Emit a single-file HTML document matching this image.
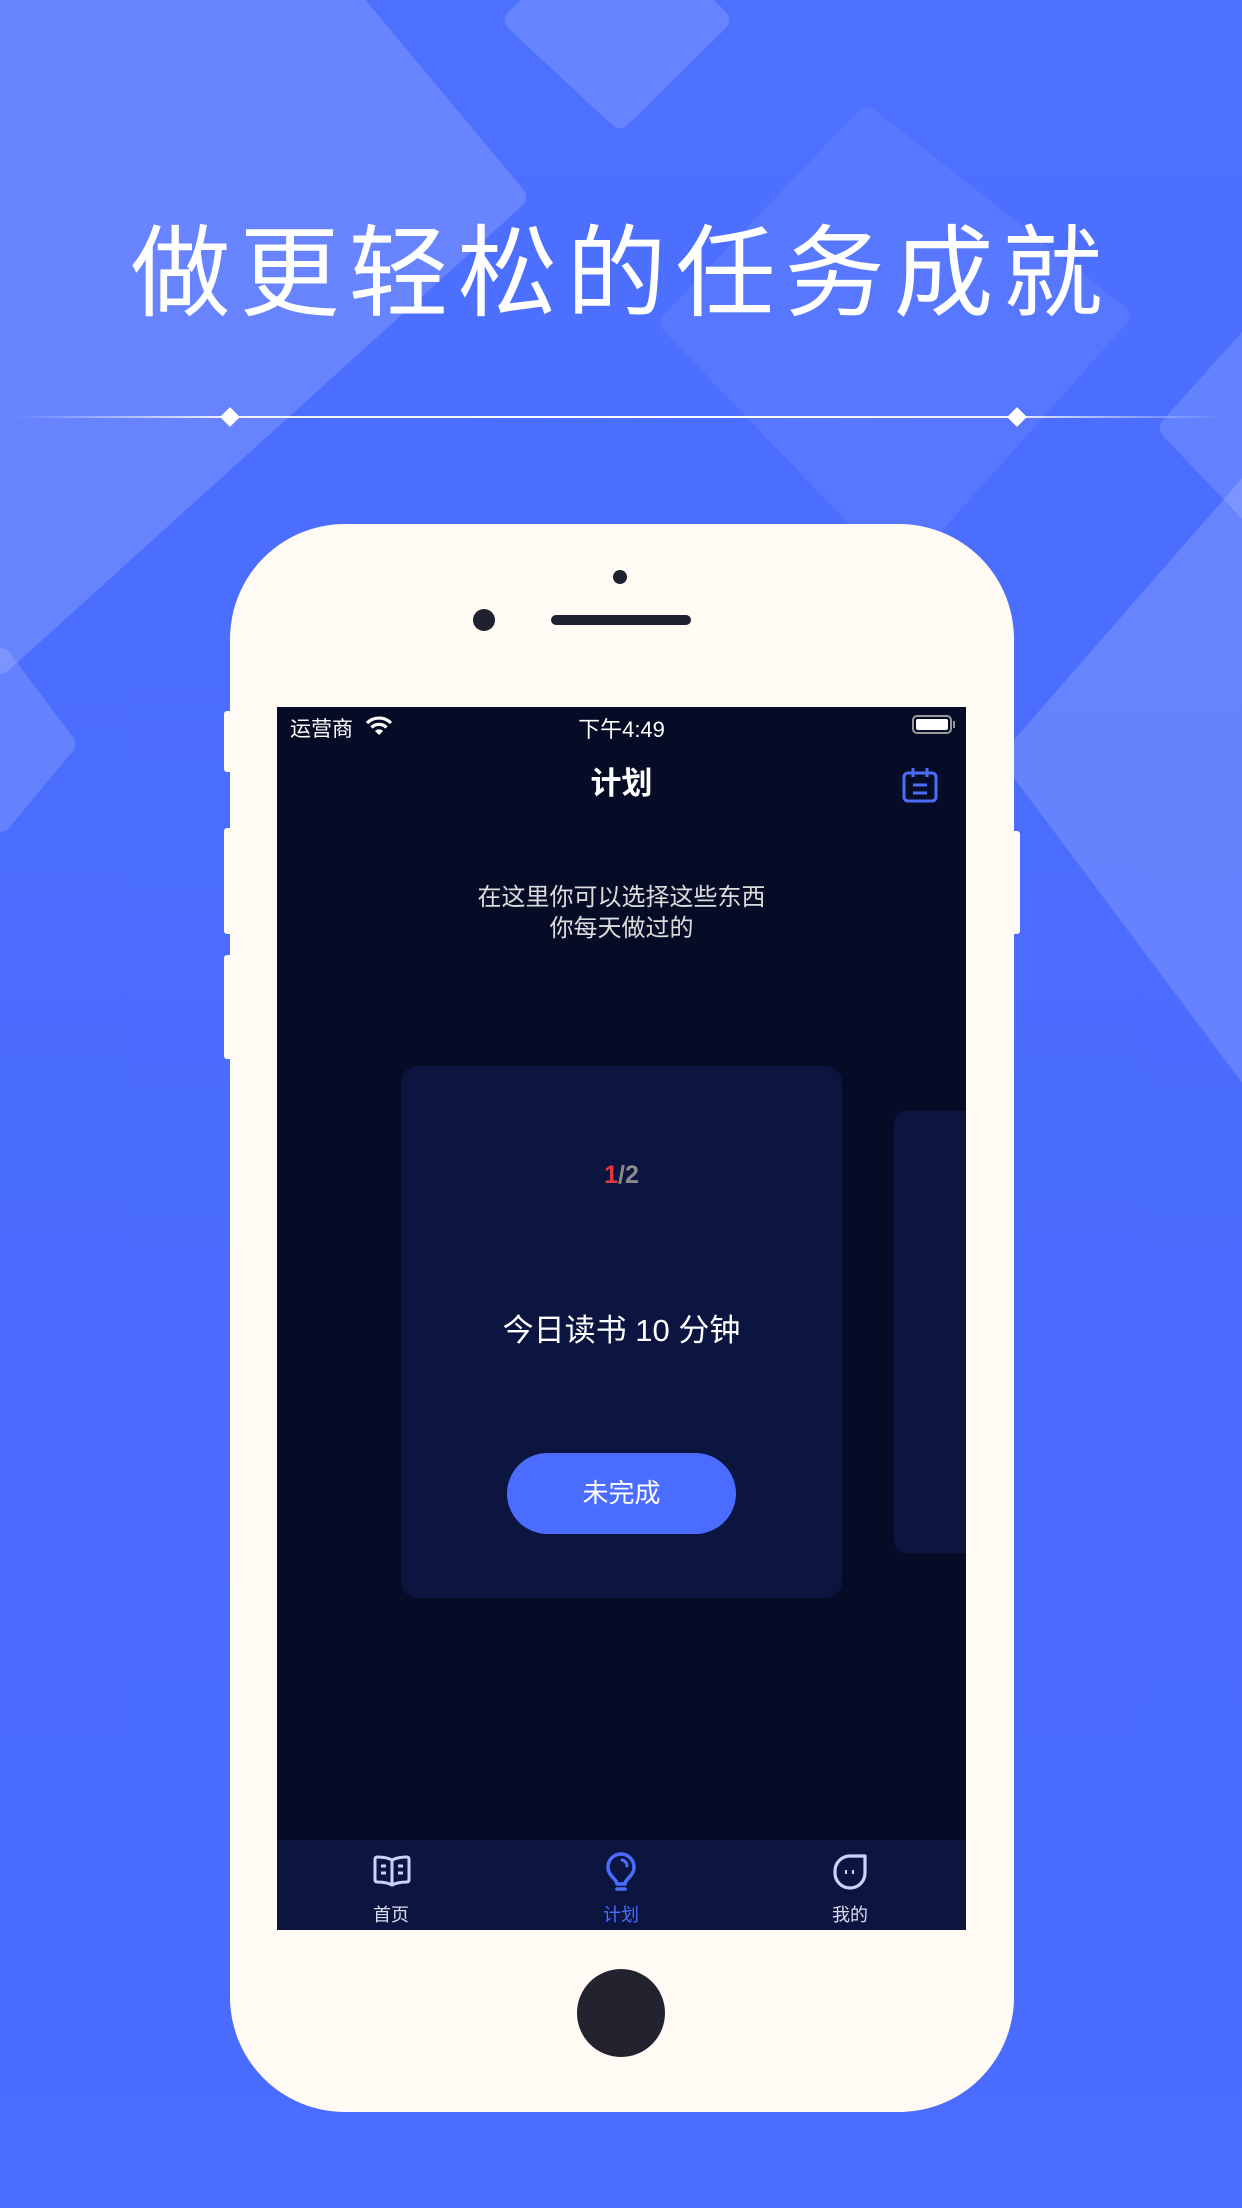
<!DOCTYPE html>
<html><head><meta charset="utf-8"><style>
*{margin:0;padding:0;box-sizing:border-box}
body{width:1242px;height:2208px;overflow:hidden;position:relative;background:linear-gradient(180deg,#4d70ff 0%,#4a6bfd 60%,#4a6cff 100%);font-family:"Liberation Sans","Noto Sans CJK SC",sans-serif}
.abs{position:absolute}
</style></head><body>
<svg class="abs" style="left:0;top:0" width="1242" height="1200" viewBox="0 0 1242 1200">
 <g stroke-linejoin="round" stroke-width="24" fill="#fff" stroke="#fff">
  <polygon points="514,197 0,662 -400,200 100,-300" opacity=".15"/>
  <polygon points="620,-76 717,20 620,116 517,20" opacity=".14"/>
  <polygon points="867,119 1117,316 900,560 673,323" opacity=".06"/>
  <polygon points="1014,758 1300,430 1600,760 1300,1140" opacity=".15"/>
  <polygon points="1172,428 1260,330 1350,428 1260,520" opacity=".13"/>
  <polygon points="-80,744 0,660 63,744 0,820" opacity=".14"/>
 </g>
</svg>

<div class="abs" style="left:0;top:205px;width:1242px;text-align:center;color:#fff;font-size:100px;letter-spacing:9px;font-family:'Noto Sans CJK SC',sans-serif;font-weight:400;line-height:120px">做更轻松的任务成就</div>

<div class="abs" style="left:14px;top:416px;width:1211px;height:2px;background:linear-gradient(90deg,rgba(255,255,255,0),rgba(255,255,255,.9) 18%,#fff 50%,rgba(255,255,255,.9) 82%,rgba(255,255,255,0))"></div>
<div class="abs" style="left:223px;top:410px;width:14px;height:14px;background:#fff;transform:rotate(45deg)"></div>
<div class="abs" style="left:1010px;top:410px;width:14px;height:14px;background:#fff;transform:rotate(45deg)"></div>

<!-- phone -->
<div class="abs" style="left:224px;top:711px;width:10px;height:61px;background:#fffaf4;border-radius:3px"></div>
<div class="abs" style="left:224px;top:828px;width:10px;height:106px;background:#fffaf4;border-radius:3px"></div>
<div class="abs" style="left:224px;top:955px;width:10px;height:104px;background:#fffaf4;border-radius:3px"></div>
<div class="abs" style="left:1010px;top:831px;width:10px;height:103px;background:#fffaf4;border-radius:3px"></div>
<div class="abs" style="left:230px;top:524px;width:784px;height:1588px;background:#fffaf4;border-radius:115px"></div>
<div class="abs" style="left:613px;top:570px;width:14px;height:14px;background:#1f2030;border-radius:50%"></div>
<div class="abs" style="left:473px;top:609px;width:22px;height:22px;background:#1f2030;border-radius:50%"></div>
<div class="abs" style="left:551px;top:615px;width:140px;height:10px;background:#1f2030;border-radius:5px"></div>
<div class="abs" style="left:577px;top:1969px;width:88px;height:88px;background:#22232e;border-radius:50%"></div>

<!-- screen -->
<div class="abs" style="left:277px;top:707px;width:689px;height:1223px;background:#070c26;overflow:hidden;color:#fff">
 <div class="abs" style="left:13px;top:6px;font-size:21px">运营商</div>
 <svg class="abs" style="left:88px;top:8px" width="28" height="22" viewBox="0 0 28 22"><path d="M2 8a17 17 0 0 1 24 0" stroke="#fff" stroke-width="3.2" fill="none"/><path d="M6.5 12.5a10.5 10.5 0 0 1 15 0" stroke="#fff" stroke-width="3.2" fill="none"/><path d="M10 16l4 4 4-4a5.6 5.6 0 0 0-8 0z" fill="#fff"/></svg>
 <div class="abs" style="left:0;width:689px;top:5px;text-align:center;font-size:22px">下午4:49</div>
 <div class="abs" style="left:635px;top:8px;width:40px;height:19px;border:2px solid #999;border-radius:5px;padding:2px"><div style="width:100%;height:100%;background:#fff;border-radius:2px"></div></div>
 <div class="abs" style="left:676px;top:14px;width:2px;height:7px;background:#999"></div>
 <div class="abs" style="left:0;width:689px;top:57px;text-align:center;font-size:31px;font-weight:bold;line-height:40px">计划</div>
 <svg class="abs" style="left:625px;top:60px" width="36" height="36" viewBox="0 0 36 36"><rect x="2" y="6" width="32" height="28" rx="4" fill="none" stroke="#4a6cff" stroke-width="3"/><path d="M11 1v9M25 1v9M11 18h14M11 26h14" stroke="#4a6cff" stroke-width="3"/></svg>
 <div class="abs" style="left:0;width:689px;top:175px;text-align:center;font-size:24px;line-height:31px;color:#ddd">在这里你可以选择这些东西<br>你每天做过的</div>
 <div class="abs" style="left:124px;top:359px;width:441px;height:532px;background:#0b1540;border-radius:17px">
  <div class="abs" style="left:0;width:441px;top:95px;text-align:center;font-size:25px;font-weight:bold;color:#8a8a8a"><span style="color:#e8383f">1</span>/2</div>
  <div class="abs" style="left:0;width:441px;top:245px;text-align:center;font-size:31px;line-height:40px">今日读书 10 分钟</div>
  <div class="abs" style="left:106px;top:387px;width:229px;height:81px;background:#4a6cff;border-radius:41px;text-align:center;line-height:81px;font-size:26px">未完成</div>
 </div>
 <div class="abs" style="left:617px;top:404px;width:90px;height:442px;background:#0b1540;border-radius:12px"></div>
 <div class="abs" style="left:0;top:1133px;width:689px;height:90px;background:#0b1540">
  <svg class="abs" style="left:96px;top:14px" width="38" height="36" viewBox="0 0 38 36"><path d="M19 31c-4-2-10-3-15-3a2 2 0 0 1-2-2V5a2 2 0 0 1 2-2c5 0 11 1 15 3 4-2 10-3 15-3a2 2 0 0 1 2 2v21a2 2 0 0 1-2 2c-5 0-11 1-15 3zM19 6v25" fill="none" stroke="#c8d4ff" stroke-width="3"/><path d="M8 12h5M8 19h5M25 12h5M25 19h5" stroke="#c8d4ff" stroke-width="3"/></svg>
  <div class="abs" style="left:64px;width:100px;top:61px;text-align:center;font-size:18px;color:#dde">首页</div>
  <svg class="abs" style="left:328px;top:12px" width="32" height="42" viewBox="0 0 32 42"><path d="M12 32c0-5-9-8-9-17a13 13 0 0 1 26 0c0 9-9 12-9 17z" fill="none" stroke="#4a6cff" stroke-width="3.5" stroke-linejoin="round"/><path d="M12 37h8" stroke="#4a6cff" stroke-width="3.5" stroke-linecap="round"/><path d="M17 8a6 6 0 0 1 5 6" stroke="#4a6cff" stroke-width="3" fill="none" stroke-linecap="round"/></svg>
  <div class="abs" style="left:294px;width:100px;top:61px;text-align:center;font-size:18px;color:#4a6cff">计划</div>
  <svg class="abs" style="left:555px;top:13px" width="36" height="38" viewBox="0 0 36 38"><path d="M33 3H18A15 15 0 0 0 3 18v2a15 15 0 0 0 15 15 15 15 0 0 0 15-15z" fill="none" stroke="#c8d4ff" stroke-width="3.2" stroke-linejoin="round"/><path d="M14 17v4M21 17v4" stroke="#c8d4ff" stroke-width="2"/></svg>
  <div class="abs" style="left:523px;width:100px;top:61px;text-align:center;font-size:18px;color:#dde">我的</div>
 </div>
</div>
</body></html>
